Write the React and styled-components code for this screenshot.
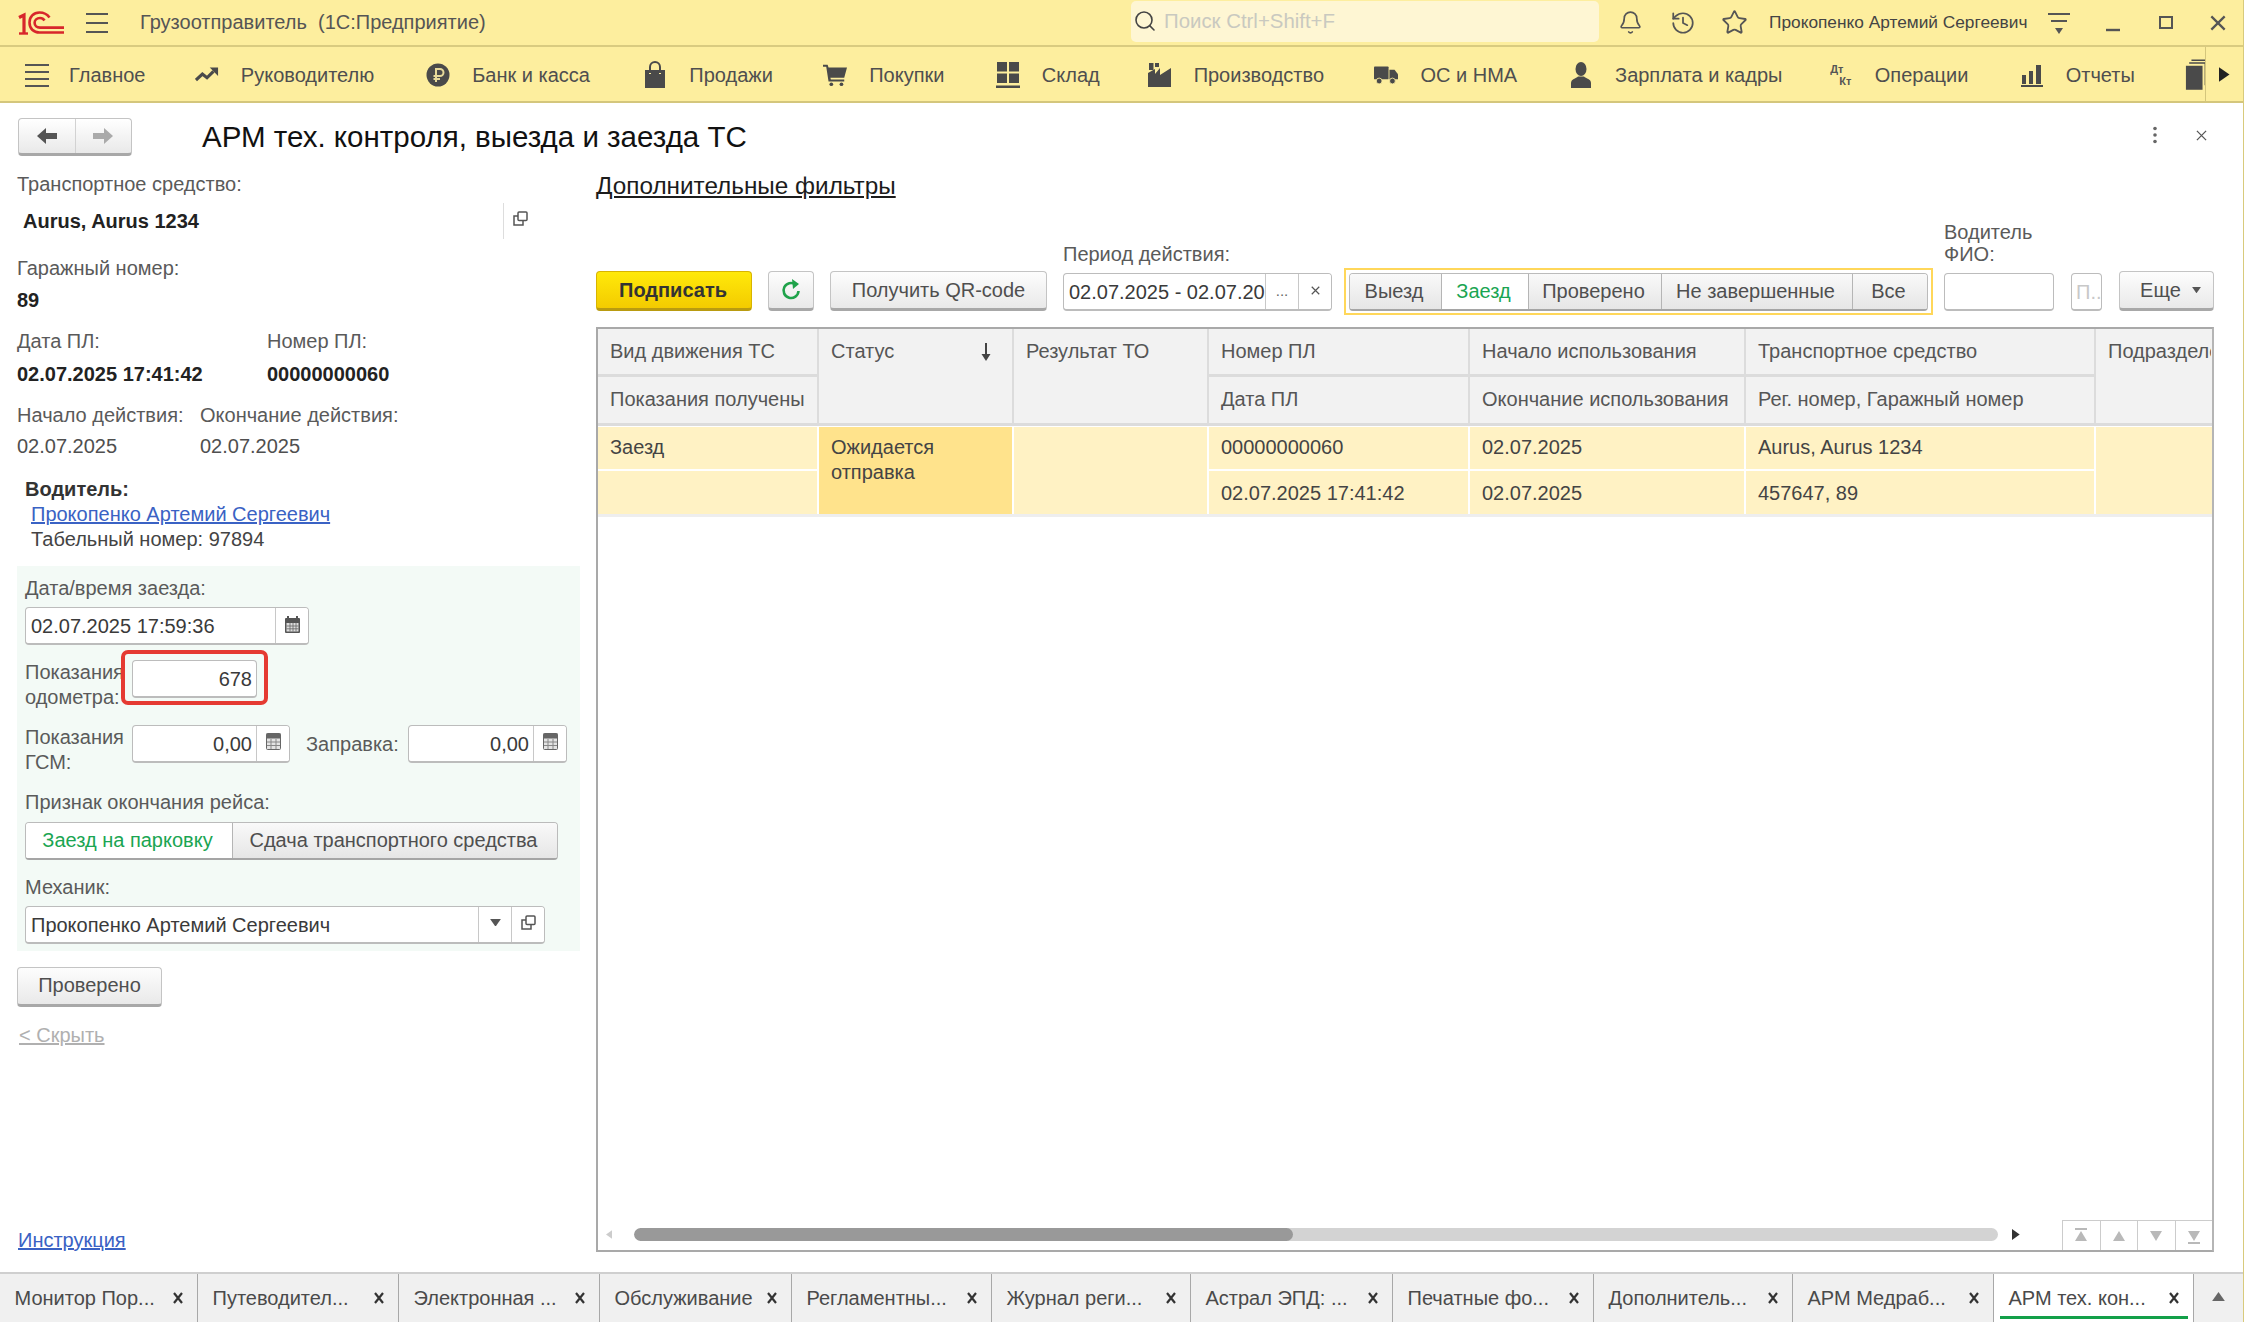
import React from "react";
import styled, { createGlobalStyle } from "styled-components";
import { Bell, History, Star, Search } from "lucide-react";

const Global = createGlobalStyle`
  html, body { margin: 0; padding: 0; background: #fff; }
  body { font-family: "Liberation Sans", Arial, sans-serif; font-size: 20px; color: #4a4a4a; }
  * { box-sizing: border-box; }
`;

const Page = styled.div`
  width: 2244px; height: 1322px; display: flex; flex-direction: column; overflow: hidden;
  border-right: 1px solid #d8ca7c;
`;

/* ---------- top bar ---------- */
const TopBar = styled.header`
  height: 47px; flex: none; display: flex; align-items: center;
  background: #fdee9e; border-bottom: 2px solid #d9cb80;
`;
const LogoSlot = styled.div`width: 86px; padding-left: 18px; display: flex; align-items: center;`;
const BurgerSlot = styled.div`width: 54px; display: flex; justify-content: flex-start; align-items: center;`;
const AppTitle = styled.div`flex: 1; font-size: 20px; color: #555; white-space: pre;`;
const SearchBox = styled.div`
  width: 468px; height: 41px; background: #fef6d3; border-radius: 5px; display: flex; align-items: center;
  padding-left: 2px; gap: 7px; color: #c9c9c0; font-size: 20.4px; margin-bottom: 3px;
`;
const TopSlot = styled.div`
  width: ${p => p.$w}px; display: flex; align-items: center; justify-content: center; color: #555;
`;
const UserName = styled.div`width: 257px; margin-left: 10px; font-size: 17.3px; color: #444; white-space: nowrap;`;

/* ---------- section bar ---------- */
const SectionBar = styled.nav`
  height: 56px; flex: none; display: flex; align-items: center; padding: 2px 0 0 25px; gap: 50.4px;
  background: #fdee9e; border-bottom: 2px solid #d4c67c; position: relative;
`;
const SectionItem = styled.div`
  display: flex; align-items: center; white-space: nowrap; color: #4f4f4f; font-size: 20px; margin-left: ${p => p.$nudge || 0}px;
`;
const SectionIcon = styled.span`
  width: 24px; margin-right: ${p => p.$tight ? 20 : 22}px; height: 28px; display: flex; align-items: center; justify-content: center; flex: none;
`;
const MoreSections = styled.div`
  position: absolute; right: 0; top: 0; bottom: 0; width: 38px; border-left: 1px solid #d4c67c;
  background: #fdee9e; display: flex; align-items: center; justify-content: center;
`;
const DtKt = styled.span`
  display: flex; flex-direction: column; font-size: 11px; font-weight: 700; line-height: 12px; color: #555; letter-spacing: 0;
  span:last-child { margin-left: 9px; }
`;

/* ---------- title row ---------- */
const TitleRow = styled.div`height: 62px; flex: none; display: flex; align-items: center; padding: 0 18px 0 18px;`;
const NavGroup = styled.div`
  width: 114px; height: 38px; display: flex; border: 1px solid #c4c4c4; border-bottom: 3px solid #a8a8a8; border-radius: 4px;
  background: linear-gradient(#fff, #e9e9e9); margin-top: 5px;
`;
const NavButton = styled.div`
  flex: 1; display: flex; align-items: center; justify-content: center;
  & + & { border-left: 1px solid #d2d2d2; }
`;
const PageTitle = styled.h1`
  flex: 1; margin: 5px 0 0 70px; font-size: 29.5px; font-weight: 400; color: #111; white-space: nowrap;
`;
const TitleAction = styled.div`display: flex; align-items: center; justify-content: center; width: 47px; color: #666; margin-top: 2px;`;

/* ---------- body ---------- */
const Body = styled.main`flex: 1; display: flex; min-height: 0;`;
const Sidebar = styled.aside`
  width: 596px; flex: none; padding: 7px 0 18px 17px; display: flex; flex-direction: column;
`;
const Label = styled.div`line-height: 25px; color: #5a5a5a; white-space: nowrap; margin-top: ${p => p.$mt || 0}px;`;
const Value = styled.div`
  line-height: 25px; color: ${p => p.$bold ? "#222" : "#4f4f4f"}; font-weight: ${p => p.$bold ? 700 : 400}; white-space: nowrap;
  margin-top: ${p => p.$mt || 0}px;
`;
const TransportRow = styled.div`width: 511px; display: flex; align-items: center; justify-content: space-between; margin-top: 6px; height: 36px;`;
const TransportValue = styled(Value)`padding-left: 6px;`;
const TransportOpen = styled.div`
  height: 36px; width: 25px; border-left: 1px solid #ddd; display: flex; align-items: center; justify-content: flex-end; padding-bottom: 6px;
`;
const Columns = styled.div`display: grid; grid-template-columns: ${p => p.$first}px auto; justify-content: start; margin-top: ${p => p.$mt}px;`;
const DriverBlock = styled.div`padding-left: 8px; margin-top: 18px; line-height: 25px;`;
const DriverTitle = styled.div`font-weight: 700; color: #333;`;
const DriverLine = styled.div`padding-left: 6px; color: #444;`;
const BlueLink = styled.a`color: #3a62c4; text-decoration: underline; white-space: nowrap;`;
const HideLink = styled.a`display: block; color: #b0b0b0; text-decoration: underline; line-height: 25px; margin: 16px 0 0 2px;`;
const HelpLink = styled(BlueLink)`margin-top: auto; margin-left: 1px; margin-bottom: 1px; line-height: 25px;`;

const GreenPanel = styled.section`
  width: 563px; margin-top: 14px; padding: 9.5px 0 7px 8px; background: #f3faf6; display: flex; flex-direction: column;
`;
const FieldBox = styled.div`
  display: flex; height: 38px; width: ${p => p.$w}px; flex: none; background: #fff; border: 1px solid #bcbcbc; border-bottom-width: 2px; border-radius: 4px;
  margin-top: ${p => p.$mt || 0}px; overflow: hidden; color: #3a3a3a;
`;
const FieldText = styled.div`
  flex: 1; min-width: 0; padding: 0 ${p => p.$right ? 4 : 5}px 0 5px; line-height: 36px; white-space: nowrap; overflow: hidden;
  text-align: ${p => p.$right ? "right" : "left"};
`;
const FieldHint = styled(FieldText)`color: #c8c8c8; padding: 0 4px;`;
const FieldButton = styled.div`
  width: ${p => p.$w || 33}px; flex: none; border-left: 1px solid #c8c8c8; background: #fff;
  display: flex; align-items: center; justify-content: center; padding-bottom: 3px; color: #666; font-size: 15px;
`;
const MeterRow = styled.div`display: flex; height: 50px; margin-top: ${p => p.$mt}px;`;
const MeterLabel = styled.div`width: 107px; flex: none; line-height: 25px; color: #5a5a5a;`;
const Highlighted = styled.div`
  position: relative; height: 38px;
  &::after {
    content: ""; position: absolute; left: -11px; right: -11px; top: -10px; bottom: -7px;
    border: 4px solid #e53a32; border-radius: 7px; pointer-events: none;
  }
`;
const FuelLabel = styled.div`width: 102px; flex: none; margin-left: 16px; line-height: 38px; color: #5a5a5a;`;
const Toggle = styled.div`
  display: flex; height: 38px; width: ${p => p.$w}px; border: 1px solid #bbb; border-bottom-width: 2px; border-bottom-color: #a5a5a5; border-radius: 4px; overflow: hidden; flex: none;
  margin-top: ${p => p.$mt || 0}px;
`;
const ToggleItem = styled.div`
  width: ${p => p.$w ? p.$w + "px" : "auto"}; flex: ${p => p.$w ? "none" : 1}; display: flex; align-items: center; justify-content: center;
  white-space: nowrap; padding-right: 3px;
  background: ${p => p.$active ? "#fff" : "linear-gradient(#f9f9f9, #e6e6e6)"};
  color: ${p => p.$active ? "#1aa552" : "#4f4f4f"};
  & + & { border-left: 1px solid #b5b5b5; }
`;
const PlainButton = styled.button`
  height: 40px; width: ${p => p.$w}px; flex: none; font: inherit; color: #4f4f4f; padding: 0; margin: ${p => p.$mt || 0}px 0 0;
  background: linear-gradient(#fdfdfd, #e9e9e9); border: 1px solid #c4c4c4; border-bottom: 3px solid #a8a8a8; border-radius: 4px;
  display: flex; align-items: center; justify-content: center; white-space: nowrap;
`;
const MoreButton = styled(PlainButton)`padding-left: 8px;`;
const SignButton = styled(PlainButton)`
  background: linear-gradient(#ffe90a, #f3cb00); border: 1px solid #d8b400; border-bottom: 3px solid #b99b10;
  font-weight: 700; color: #333; padding-right: 2px;
`;

/* ---------- main ---------- */
const Content = styled.section`flex: 1; min-width: 0; margin-right: 29px; display: flex; flex-direction: column; padding-bottom: 20px;`;
const FiltersLink = styled.a`
  font-size: 24.3px; color: #1c1c1c; text-decoration: underline; line-height: 28px; margin-top: 7px; white-space: nowrap; align-self: flex-start;
`;
const Toolbar = styled.div`height: 125px; margin-top: -10px; flex: none; display: flex; align-items: flex-end;`;
const Tool = styled.div`margin-left: ${p => p.$ml || 0}px; flex: none; margin-bottom: 4px; width: ${p => p.$w ? p.$w + "px" : "auto"};`;
const ToolLabel = styled.div`line-height: 22px; color: #5a5a5a; margin-bottom: 8px; white-space: nowrap;`;
const FilterFrame = styled.div`
  margin-left: 12px; flex: none; height: 47px; width: 589px; padding: 3px; border: 2px solid #ffd75a; display: flex;
`;
const FilterItem = styled(ToggleItem)``;
const Table = styled.div`
  margin-top: 12px; flex: 1; border: 2px solid #a9a9a9; border-right-color: #b5b5b5; display: flex; flex-direction: column; min-height: 0;
`;
const cols = "219px 193px 193px 259px 274px 348px 1fr";
const HeadGrid = styled.div`
  display: grid; grid-template-columns: ${cols}; grid-template-rows: 45px 46px; gap: 3px 2px; background: #dcdcdc; padding-bottom: 3px;
`;
const HeadCell = styled.div`
  background: #f2f2f2; padding: 6px 12px 0; display: flex; justify-content: space-between; line-height: 32px; color: #565656; white-space: nowrap; overflow: hidden;
  grid-row: ${p => p.$span ? "span 2" : "auto"};
`;
const HeadClip = styled.span`display: block; width: 103px; overflow: hidden; flex: none;`;
const SortMark = styled.span`padding: 3px 9px 0 0;`;
const RowGrid = styled.div`
  display: grid; grid-template-columns: ${cols}; grid-template-rows: 42px 43px; gap: 2px; background: #fff; border-top: 1px solid #fff; border-bottom: 3px solid #eeeeee;
`;
const DataCell = styled.div`
  background: ${p => p.$status ? "#ffe38c" : "#fff2c4"}; padding: ${p => p.$low ? 2 : 0}px 12px 0; line-height: 41px; color: #444; white-space: nowrap;
  grid-row: ${p => p.$span ? "span 2" : "auto"};
`;
const StatusText = styled.div`line-height: 25px; padding-top: 8px;`;
const TableSpacer = styled.div`flex: 1;`;
const TableFooter = styled.div`height: 22px; display: flex; align-items: flex-start; padding-left: 8px;`;
const ScrollEnd = styled.div`width: ${p => p.$w}px; height: 13px; display: flex; align-items: center; justify-content: ${p => p.$r ? "flex-end" : "flex-start"}; flex: none;`;
const ScrollTrack = styled.div`width: 1364px; height: 13px; background: #d3d3d3; border-radius: 7px; overflow: hidden; flex: none;`;
const ScrollThumb = styled.div`width: 659px; height: 100%; background: #999; border-radius: 7px;`;
const PagerGroup = styled.div`
  margin-left: auto; width: 150px; height: 30px; margin-top: -8px; display: flex; border: 1px solid #ccc; border-bottom: none; border-right: none; flex: none;
`;
const PagerButton = styled.div`
  flex: 1; display: flex; align-items: center; justify-content: center;
  & + & { border-left: 1px solid #ccc; }
`;

/* ---------- tabs ---------- */
const Tabs = styled.footer`
  height: 50px; flex: none; display: flex; background: #f0f0f0; border-top: 2px solid #cfcfcf;
`;
const TabItem = styled.div`
  width: ${p => p.$w}px; flex: none; display: flex; align-items: center; padding: 0 14px 0 14.5px; position: relative;
  border-right: 1px solid #a8a8a8; background: ${p => p.$active ? "#fff" : "transparent"}; color: #4a4a4a; justify-content: space-between;
  white-space: nowrap;
  ${p => p.$active ? `&::after { content: ""; position: absolute; left: 6px; right: 5px; bottom: 3px; height: 3px; background: #13a049; }` : ""}
`;
const TabsMore = styled.div`flex: 1; display: flex; align-items: center; justify-content: center; padding-bottom: 2px;`;

/* ---------- icons ---------- */
const Logo = () => (
  <svg width="46" height="24" viewBox="0 0 46 24" fill="none" stroke="#d7262b" strokeWidth="2.6">
    <path d="M1 6.5 L6 4 V22.5" strokeWidth="3.2" />
    <path d="M1 22.5 H10" strokeWidth="2.4" />
    <path d="M31.5 6.5 C29 3 25 1.5 21.5 1.5 C15.5 1.5 11.5 6 11.5 11.5 C11.5 17.5 15.5 21.5 21.5 21.5 H46" />
    <path d="M26.5 9.5 C25.5 7.8 24 7 22 7 C18.8 7 16.6 9 16.6 11.8 C16.6 14.6 18.8 16.6 22 16.6 H46" />
  </svg>
);
const Lines = ({ n = 3, w = 22, h = 20 }) => (
  <svg width={w} height={h} viewBox={`0 0 ${w} ${h}`} stroke="#555" strokeWidth="2">
    {Array.from({ length: n }, (_, i) => {
      const y = 1 + (i * (h - 2)) / (n - 1);
      return <line key={i} x1="0" x2={w} y1={y} y2={y} />;
    })}
  </svg>
);
const Dark = "#4a4a4a";
const Trend = () => (
  <svg width="26" height="18" viewBox="0 0 26 18"><path d="M1 14.5 L8 8 L13 12 L20 5" fill="none" stroke={Dark} strokeWidth="3.4" /><path d="M16 1 H25 V10 Z" fill={Dark} /></svg>
);
const Ruble = () => (
  <svg width="24" height="24" viewBox="0 0 24 24"><circle cx="12" cy="12" r="11.5" fill={Dark} /><path d="M10 19 V6 H14 A3.5 3.5 0 0 1 14 13 H7.5 M7.5 16 H14" fill="none" stroke="#e6d99a" strokeWidth="2" /></svg>
);
const Bag = () => (
  <svg width="22" height="28" viewBox="0 0 22 28"><path d="M6 12 V6 A5 5 0 0 1 16 6 V12" fill="none" stroke={Dark} strokeWidth="2" /><path d="M1 9 H5 V13 H7 V9 H15 V13 H17 V9 H21 V27 H1 Z" fill={Dark} /></svg>
);
const Cart = () => (
  <svg width="26" height="24" viewBox="0 0 26 24"><path d="M0 1 H5 L6 4 H26 L23 15 H8 L8.5 17 H23 V19 H6 L3.5 3 H0 Z" fill={Dark} /><circle cx="9" cy="22" r="2" fill={Dark} /><circle cx="20" cy="22" r="2" fill={Dark} /></svg>
);
const Warehouse = () => (
  <svg width="24" height="26" viewBox="0 0 24 26" fill={Dark}><rect x="1" y="0" width="10" height="9.5" /><rect x="13" y="0" width="10" height="9.5" /><rect x="1" y="11.5" width="10" height="9.5" /><rect x="13" y="11.5" width="10" height="9.5" /><rect x="0" y="23.5" width="24" height="2.5" /></svg>
);
const Factory = () => (
  <svg width="24" height="24" viewBox="0 0 24 24" fill={Dark}><rect x="1" y="0" width="4.5" height="7" /><rect x="7" y="0" width="4" height="4" /><path d="M0 10 L7 6 V11 L12 5 V12 L23 5 V24 H0 Z" /></svg>
);
const Truck = () => (
  <svg width="28" height="22" viewBox="0 0 28 22" fill={Dark}><rect x="0" y="1" width="17" height="15" rx="1" /><path d="M18 5 H24 L28 10 V16 H18 Z" /><circle cx="6" cy="18" r="3.4" stroke="#fdee9e" /><circle cx="21.5" cy="18" r="3.4" stroke="#fdee9e" /></svg>
);
const Person = () => (
  <svg width="20" height="26" viewBox="0 0 20 26" fill={Dark}><ellipse cx="10" cy="7" rx="5.5" ry="7" /><path d="M0 26 V21 C0 17 5 16.5 7 14.5 H13 C15 16.5 20 17 20 21 V26 Z" /></svg>
);
const Bars = () => (
  <svg width="22" height="24" viewBox="0 0 22 24" fill={Dark}><rect x="1" y="12" width="4" height="9" /><rect x="8" y="8" width="4" height="13" /><rect x="15" y="2" width="5" height="19" /><rect x="0" y="22" width="22" height="2" /></svg>
);
const Stack = () => (
  <svg width="26" height="34" viewBox="0 0 26 34"><path d="M7 1 H25 V25 M4.5 4 H22 V28" fill="none" stroke={Dark} strokeWidth="1.5" /><rect x="1" y="7" width="18" height="26" fill={Dark} /></svg>
);
const Tri = ({ dir = "right", size = 14, color = "#333" }) => {
  const pts = { right: "0,0 10,7 0,14", left: "10,0 0,7 10,14", up: "0,10 7,0 14,10", down: "0,0 14,0 7,10" }[dir];
  const box = dir === "right" || dir === "left" ? "0 0 10 14" : "0 0 14 10";
  const wh = dir === "right" || dir === "left" ? { width: size * 0.7, height: size } : { width: size, height: size * 0.7 };
  return <svg {...wh} viewBox={box}><polygon points={pts} fill={color} /></svg>;
};
const NavArrow = ({ flip, color }) => (
  <svg width="20" height="16" viewBox="0 0 20 16"><path d={flip ? "M20 8 L11 0 V5 H0 V11 H11 V16 Z" : "M0 8 L9 0 V5 H20 V11 H9 V16 Z"} fill={color} /></svg>
);
const Copy = () => (
  <svg width="15" height="15" viewBox="0 0 15 15" fill="none" stroke="#555" strokeWidth="1.5"><rect x="5" y="1" width="9" height="8.5" rx="1" /><path d="M5 5 H1 V14 H10 V10" /></svg>
);
const Calendar = () => (
  <svg width="15" height="17" viewBox="0 0 15 17"><rect x="0" y="2" width="15" height="15" rx="1" fill="#555" /><rect x="1.5" y="7" width="12" height="8.5" fill="#ddd" /><path d="M3 0 V3 M12 0 V3" stroke="#555" strokeWidth="2" /><path d="M1.5 10 H13.5 M1.5 12.8 H13.5 M5 7 V15.5 M8 7 V15.5 M11 7 V15.5" stroke="#666" strokeWidth="0.8" /></svg>
);
const Calc = () => (
  <svg width="15" height="17" viewBox="0 0 15 17"><rect x="0.5" y="0.5" width="14" height="16" rx="1" fill="#e4e4e4" stroke="#666" /><rect x="0.5" y="0.5" width="14" height="5" fill="#666" /><path d="M1 9 H14 M1 12.5 H14 M5 6 V16 M10 6 V16" stroke="#888" strokeWidth="1" /></svg>
);
const Refresh = () => (
  <svg width="20" height="22" viewBox="0 0 20 22" fill="none"><path d="M14.5 5.5 A7.5 7.5 0 1 0 17.5 12" stroke="#1fa24a" strokeWidth="2.6" /><path d="M11 0 L18 5 L12 10 Z" fill="#1fa24a" /></svg>
);
const SortDown = () => (
  <svg width="10" height="18" viewBox="0 0 10 18"><path d="M5 0 V13" stroke="#444" strokeWidth="2" /><path d="M0.5 11 H9.5 L5 18 Z" fill="#444" /></svg>
);
const Cross = ({ size = 12, w = 1.6, color = "#555" }) => (
  <svg width={size} height={size} viewBox="0 0 12 12" stroke={color} strokeWidth={w}><path d="M1 1 L11 11 M11 1 L1 11" /></svg>
);
const TabClose = () => (
  <svg width="10" height="12" viewBox="0 0 10 12" stroke="#333" strokeWidth="2.2"><path d="M1 1 L9 11 M9 1 L1 11" /></svg>
);
const Dots = () => (
  <svg width="4" height="18" viewBox="0 0 4 18" fill="#666"><circle cx="2" cy="2.5" r="1.8" /><circle cx="2" cy="9" r="1.8" /><circle cx="2" cy="15.5" r="1.8" /></svg>
);
const PagerIcon = ({ dir, bar }) => (
  <svg width="14" height="16" viewBox="0 0 14 16" fill="#b9b9b9">
    {dir === "up" ? <polygon points="7,3 13,13 1,13" /> : <polygon points="1,3 13,3 7,13" />}
    {bar === "top" && <rect x="1" y="0" width="12" height="2" />}
    {bar === "bottom" && <rect x="1" y="14" width="12" height="2" />}
  </svg>
);

/* ---------- data ---------- */
const sections = [
  [<Lines n={4} w={24} h={23} />, "Главное", 0],
  [<Trend />, "Руководителю", -1],
  [<Ruble />, "Банк и касса", 1.5],
  [<Bag />, "Продажи", 3],
  [<Cart />, "Покупки", 0],
  [<Warehouse />, "Склад", 1],
  [<Factory />, "Производство", -2.5],
  [<Truck />, "ОС и НМА", 0],
  [<Person />, "Зарплата и кадры", 1.5],
  [<DtKt><span>Дт</span><span>Кт</span></DtKt>, "Операции", -4],
  [<Bars />, "Отчеты", 1],
  [<Stack />, "", 0],
];
const tabs = [
  ["Монитор Пор...", 198], ["Путеводител...", 201], ["Электронная ...", 201], ["Обслуживание", 192],
  ["Регламентны...", 200], ["Журнал реги...", 199], ["Астрал ЭПД: ...", 202], ["Печатные фо...", 201],
  ["Дополнитель...", 199], ["АРМ Медраб...", 201], ["АРМ тех. кон...", 200, true],
];

export default function App() {
  return (
    <Page>
      <Global />
      <TopBar>
        <LogoSlot><Logo /></LogoSlot>
        <BurgerSlot><Lines n={3} w={22} h={20} /></BurgerSlot>
        <AppTitle>Грузоотправитель  (1С:Предприятие)</AppTitle>
        <SearchBox><Search size={24} color="#444" strokeWidth={1.6} />Поиск Ctrl+Shift+F</SearchBox>
        <TopSlot $w={5} />
        <TopSlot $w={52}><Bell size={25} strokeWidth={1.6} /></TopSlot>
        <TopSlot $w={53}><History size={26} strokeWidth={1.6} /></TopSlot>
        <TopSlot $w={50}><Star size={27} strokeWidth={1.6} /></TopSlot>
        <UserName>Прокопенко Артемий Сергеевич</UserName>
        <TopSlot $w={66}>
          <svg width="22" height="24" viewBox="0 0 22 24" stroke="#555" strokeWidth="2"><path d="M0 3 H22 M3 10 H19" /><polygon points="7,17 15,17 11,23" fill="#555" stroke="none" /></svg>
        </TopSlot>
        <TopSlot $w={47}>
          <svg width="20" height="20" viewBox="0 0 20 20" stroke="#555" strokeWidth="2.4"><path d="M0 17 H14" /></svg>
        </TopSlot>
        <TopSlot $w={54}>
          <svg width="14" height="13" viewBox="0 0 14 13" fill="none" stroke="#555" strokeWidth="2"><rect x="1" y="1" width="12" height="11" /></svg>
        </TopSlot>
        <TopSlot $w={50}><Cross size={16} w={1.7} /></TopSlot>
      </TopBar>

      <SectionBar>
        {sections.map(([icon, text, nudge], i) => (
          <SectionItem key={i} $nudge={nudge}>
            <SectionIcon $tight={i === 0}>{icon}</SectionIcon>
            {text}
          </SectionItem>
        ))}
        <MoreSections><Tri dir="right" size={15} color="#222" /></MoreSections>
      </SectionBar>

      <TitleRow>
        <NavGroup>
          <NavButton><NavArrow color="#555" /></NavButton>
          <NavButton><NavArrow flip color="#aaa" /></NavButton>
        </NavGroup>
        <PageTitle>АРМ тех. контроля, выезда и заезда ТС</PageTitle>
        <TitleAction><Dots /></TitleAction>
        <TitleAction><Cross size={11} w={1.4} /></TitleAction>
      </TitleRow>

      <Body>
        <Sidebar>
          <Label>Транспортное средство:</Label>
          <TransportRow>
            <TransportValue $bold>Aurus, Aurus 1234</TransportValue>
            <TransportOpen><Copy /></TransportOpen>
          </TransportRow>
          <Label $mt={17}>Гаражный номер:</Label>
          <Value $bold $mt={7}>89</Value>
          <Columns $first={250} $mt={16}>
            <Label>Дата ПЛ:</Label>
            <Label>Номер ПЛ:</Label>
            <Value $bold $mt={8}>02.07.2025 17:41:42</Value>
            <Value $bold $mt={8}>00000000060</Value>
          </Columns>
          <Columns $first={183} $mt={16}>
            <Label>Начало действия:</Label>
            <Label>Окончание действия:</Label>
            <Value $mt={6}>02.07.2025</Value>
            <Value $mt={6}>02.07.2025</Value>
          </Columns>
          <DriverBlock>
            <DriverTitle>Водитель:</DriverTitle>
            <DriverLine><BlueLink>Прокопенко Артемий Сергеевич</BlueLink></DriverLine>
            <DriverLine>Табельный номер: 97894</DriverLine>
          </DriverBlock>

          <GreenPanel>
            <Label>Дата/время заезда:</Label>
            <FieldBox $w={284} $mt={6.5}>
              <FieldText>02.07.2025 17:59:36</FieldText>
              <FieldButton><Calendar /></FieldButton>
            </FieldBox>
            <MeterRow $mt={15}>
              <MeterLabel>Показания<br />одометра:</MeterLabel>
              <Highlighted>
                <FieldBox $w={125}><FieldText $right>678</FieldText></FieldBox>
              </Highlighted>
            </MeterRow>
            <MeterRow $mt={14.5}>
              <MeterLabel>Показания<br />ГСМ:</MeterLabel>
              <FieldBox $w={158}>
                <FieldText $right>0,00</FieldText>
                <FieldButton><Calc /></FieldButton>
              </FieldBox>
              <FuelLabel>Заправка:</FuelLabel>
              <FieldBox $w={159}>
                <FieldText $right>0,00</FieldText>
                <FieldButton><Calc /></FieldButton>
              </FieldBox>
            </MeterRow>
            <Label $mt={15.5}>Признак окончания рейса:</Label>
            <Toggle $w={533} $mt={6.5}>
              <ToggleItem $active $w={206}>Заезд на парковку</ToggleItem>
              <ToggleItem>Сдача транспортного средства</ToggleItem>
            </Toggle>
            <Label $mt={15}>Механик:</Label>
            <FieldBox $w={520} $mt={6}>
              <FieldText>Прокопенко Артемий Сергеевич</FieldText>
              <FieldButton><Tri dir="down" size={11} color="#555" /></FieldButton>
              <FieldButton><Copy /></FieldButton>
            </FieldBox>
          </GreenPanel>
          <PlainButton $w={145} $mt={16}>Проверено</PlainButton>
          <HideLink>&lt; Скрыть</HideLink>
          <HelpLink>Инструкция</HelpLink>
        </Sidebar>

        <Content>
          <FiltersLink>Дополнительные фильтры</FiltersLink>
          <Toolbar>
            <Tool><SignButton $w={156}>Подписать</SignButton></Tool>
            <Tool $ml={16}><PlainButton $w={46}><Refresh /></PlainButton></Tool>
            <Tool $ml={16}><PlainButton $w={217}>Получить QR-code</PlainButton></Tool>
            <Tool $ml={16}>
              <ToolLabel>Период действия:</ToolLabel>
              <FieldBox $w={269}>
                <FieldText>02.07.2025 - 02.07.2025</FieldText>
                <FieldButton $w={33}>...</FieldButton>
                <FieldButton $w={33}><Cross size={9} w={1.6} /></FieldButton>
              </FieldBox>
            </Tool>
            <FilterFrame>
              <Toggle $w={579}>
                <FilterItem $w={91}>Выезд</FilterItem>
                <FilterItem $active $w={87}>Заезд</FilterItem>
                <FilterItem $w={133}>Проверено</FilterItem>
                <FilterItem $w={191}>Не завершенные</FilterItem>
                <FilterItem>Все</FilterItem>
              </Toggle>
            </FilterFrame>
            <Tool $ml={11}>
              <ToolLabel>Водитель<br />ФИО:</ToolLabel>
              <FieldBox $w={110} />
            </Tool>
            <Tool $ml={17}>
              <FieldBox $w={31}><FieldHint>П..</FieldHint></FieldBox>
            </Tool>
            <Tool $ml={17}>
              <MoreButton $w={95}>Еще&nbsp;&nbsp;<Tri dir="down" size={9} color="#555" /></MoreButton>
            </Tool>
          </Toolbar>

          <Table>
            <HeadGrid>
              <HeadCell>Вид движения ТС</HeadCell>
              <HeadCell $span>Статус<SortMark><SortDown /></SortMark></HeadCell>
              <HeadCell $span>Результат ТО</HeadCell>
              <HeadCell>Номер ПЛ</HeadCell>
              <HeadCell>Начало использования</HeadCell>
              <HeadCell>Транспортное средство</HeadCell>
              <HeadCell $span><HeadClip>Подразделение</HeadClip></HeadCell>
              <HeadCell>Показания получены</HeadCell>
              <HeadCell>Дата ПЛ</HeadCell>
              <HeadCell>Окончание использования</HeadCell>
              <HeadCell>Рег. номер, Гаражный номер</HeadCell>
            </HeadGrid>
            <RowGrid>
              <DataCell>Заезд</DataCell>
              <DataCell $span $status><StatusText>Ожидается<br />отправка</StatusText></DataCell>
              <DataCell $span />
              <DataCell>00000000060</DataCell>
              <DataCell>02.07.2025</DataCell>
              <DataCell>Aurus, Aurus 1234</DataCell>
              <DataCell $span />
              <DataCell $low />
              <DataCell $low>02.07.2025 17:41:42</DataCell>
              <DataCell $low>02.07.2025</DataCell>
              <DataCell $low>457647, 89</DataCell>
            </RowGrid>
            <TableSpacer />
            <TableFooter>
              <ScrollEnd $w={28}><Tri dir="left" size={9} color="#ccc" /></ScrollEnd>
              <ScrollTrack><ScrollThumb /></ScrollTrack>
              <ScrollEnd $r $w={22}><Tri dir="right" size={11} color="#333" /></ScrollEnd>
              <PagerGroup>
                <PagerButton><PagerIcon dir="up" bar="top" /></PagerButton>
                <PagerButton><PagerIcon dir="up" /></PagerButton>
                <PagerButton><PagerIcon dir="down" /></PagerButton>
                <PagerButton><PagerIcon dir="down" bar="bottom" /></PagerButton>
              </PagerGroup>
            </TableFooter>
          </Table>
        </Content>
      </Body>

      <Tabs>
        {tabs.map(([t, w, a]) => (
          <TabItem key={t} $w={w} $active={a}>{t}<TabClose /></TabItem>
        ))}
        <TabsMore><Tri dir="up" size={13} color="#666" /></TabsMore>
      </Tabs>
    </Page>
  );
}
